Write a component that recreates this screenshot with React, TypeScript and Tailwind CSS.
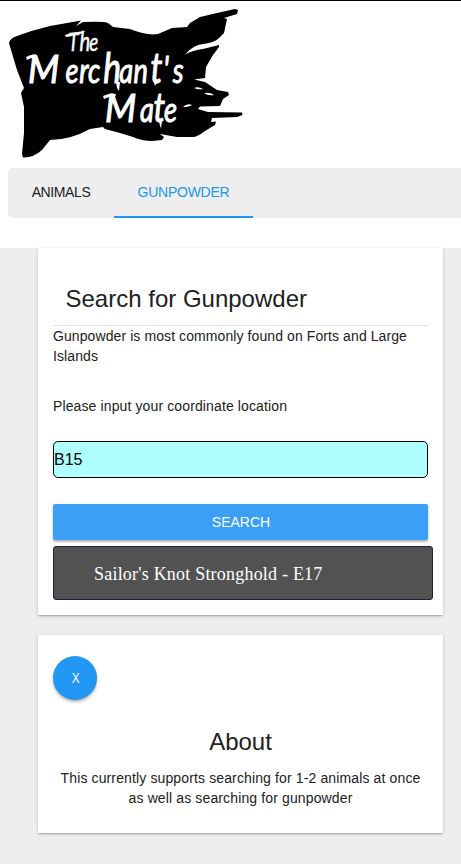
import React from "react";

function Logo() {
  return (
    <svg className="block h-[167px] w-[250px]" viewBox="0 0 250 167" role="img" aria-label="The Merchant's Mate">
      <path
        d="M9 43 Q10 38 17 36 Q33 30 50 26 L67 23 L81 20.500 L76 26 L83 22 Q105 21 108 23 L113 27 L130 29 Q147 36 158 34 L172 28 L187 27 L190 23 L200 17 L217 13 L235 9 L238 10 L237 14 L224 18 L227 19 L224 33 L218 39 Q213 43 203 44 Q193 45 185 54.500 Q193 50 203 49 L219 45 L219 47 L213 55 L206 67 L205 78 L194 79.500 L205 82 L217 90 L228 92 L229 95 L223 99 L220 106 L200 106.500 L198 109 L208 112 L242 112.500 L242.500 115 L237 117 L212 118 L211 122 L216 121.500 L215 125 L205 131 Q197 137 193 137 L177 137 L160 134 L164 137 L162 140 L152 141 Q142 141 133 137 L120 133 L105 129 L103 127 L90 129 Q70 140 50 140 L42 150 Q33 158 23 157.500 L22 154 L24 133 L24 107 L21 93 L24 88 L17 70 L11 50 Z"
        fill="#000"
      />
      <g fill="#fff" stroke="#fff" fontFamily="Lato, 'Liberation Sans', sans-serif" fontStyle="italic">
        <text transform="scale(.75 1)" fontSize="25" strokeWidth=".5" y="51" x="91 106 119">
          T<tspan fontSize="27">h</tspan>
          <tspan fontSize="25">e</tspan>
        </text>
        <text transform="scale(.93 1)" fontSize="39" strokeWidth="1.1" x="30" y="83">M</text>
        <text transform="scale(.8 1)" strokeWidth="1" y="83" x="82 99 110 129 149 167 188 204 216">
          <tspan fontSize="34">erc</tspan>
          <tspan fontSize="42">h</tspan>
          <tspan fontSize="34">an</tspan>
          <tspan fontSize="42">t</tspan>
          <tspan fontSize="36">'</tspan>
          <tspan fontSize="34">s</tspan>
        </text>
        <text transform="scale(.93 1)" fontSize="39" strokeWidth="1.1" x="113" y="122">M</text>
        <text transform="scale(.8 1)" strokeWidth="1" y="122" x="175 192 205">
          <tspan fontSize="34">a</tspan>
          <tspan fontSize="41">t</tspan>
          <tspan fontSize="34">e</tspan>
        </text>
      </g>
      <g fill="#fff">
        <path d="M65 35 Q72 32 85 31 L83 33 Q73 36 66 37Z" />
        <path d="M26 57 Q31 54 37 55 L37 58 Q32 57 27 60Z" />
        <path d="M103 96 Q109 93 116 94 L115 97 Q110 96 104 99Z" />
        <path d="M116 82 L120 82 L119 91 L117 88Z" />
        <path d="M154 82 L157 82 L155 86Z" />
        <path d="M159 121 L162 121 L161 128 L160 126Z" />
        <path d="M183 107 Q187 103 192 105 Q189 107 183 107Z" />
        <path d="M194 88 Q198 86 203 89 Q198 90 194 88Z" />
        <path d="M204 93 Q210 92 214 95 Q208 96 204 93Z" />
      </g>
    </svg>
  );
}

const cardClass =
  "ml-[38px] w-[405px] bg-white px-[15px] shadow-[0_1px_3px_rgba(0,0,0,.22),0_2px_1px_-1px_rgba(0,0,0,.14)]";

export default function App() {
  return (
    <div className="h-[864px] w-[461px] overflow-hidden border-t border-black bg-white font-['Liberation_Sans',Arial,sans-serif] text-sm leading-5 text-[#212121]">
      <header className="h-[247px]">
        <div className="-mt-px h-[168px]">
          <Logo />
        </div>
        <nav className="ml-2 flex h-[50px] rounded-l-[5px] bg-[#eee]">
          <button className="w-[106px] pb-0.5 tracking-[-.4px]">ANIMALS</button>
          <button className="w-[139px] border-b-2 border-[#2196f3] tracking-[-.25px] text-[#2196f3]">GUNPOWDER</button>
        </nav>
      </header>
      <main className="h-[617px] bg-[#eee] pt-px shadow-[inset_0_1px_white]">
        <section className={cardClass + " h-[367px]"}>
          <h1 className="h-[78px] border-b border-[#e0e0e0] pl-[12.5px] pt-[35px] text-2xl leading-8">
            Search for Gunpowder
          </h1>
          <p className="h-[70px] tracking-[.09px]">Gunpowder is most commonly found on Forts and Large Islands</p>
          <p className="h-[45px] tracking-[.12px]">Please input your coordinate location</p>
          <input
            className="block h-[37px] w-full rounded-[5px] border border-black bg-[#afffff] text-base text-black outline-none"
            defaultValue="B15"
            aria-label="Coordinate location"
          />
          <button className="mt-[26px] block h-9 w-full rounded-[2px] bg-[#3a9ff5] pl-px text-white shadow-[0_2px_2px_rgba(0,0,0,.22),0_1px_4px_rgba(0,0,0,.12)]">
            SEARCH
          </button>
          <div className="mt-1.5 flex h-[54px] w-[380px] items-center rounded-[3px] border border-[#202038] bg-[#525252] pl-10 pt-0.5 font-['Liberation_Serif',serif] text-lg tracking-[.21px] text-white">
            Sailor's Knot Stronghold - E17
          </div>
        </section>
        <section className={cardClass + " mt-5 h-[198px] pt-[21px]"}>
          <button className="flex size-11 items-center justify-center rounded-full bg-[#2196f3] pl-0.5 text-white shadow-[0_2px_3px_rgba(0,0,0,.3)]">
            <span className="scale-x-[.85]">X</span>
          </button>
          <h2 className="mt-[26px] text-center text-2xl leading-8">About</h2>
          <p className="mt-2.5 px-1.5 text-center tracking-[.13px]">
            This currently supports searching for 1-2 animals at once as well as searching for gunpowder
          </p>
        </section>
      </main>
    </div>
  );
}
